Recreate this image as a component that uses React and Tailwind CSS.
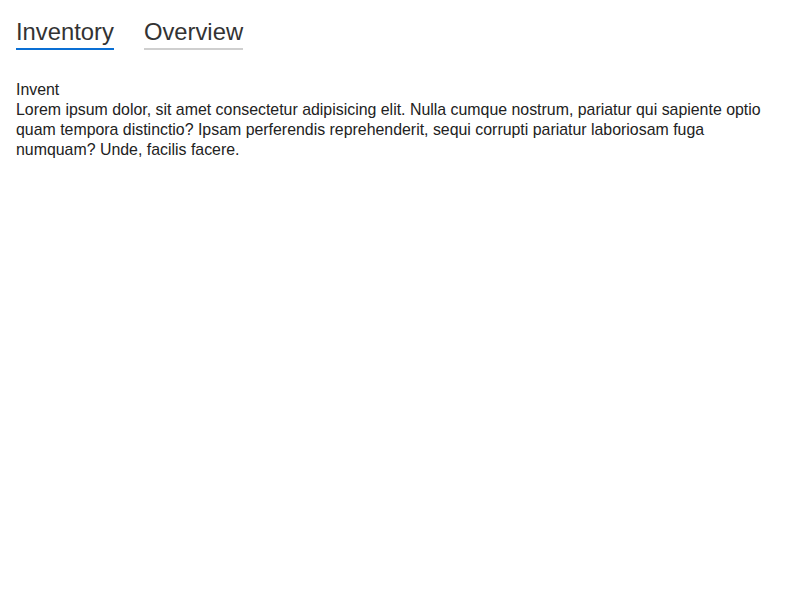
export default function App() {
  return (
    <div className="min-h-screen bg-white px-4 pt-[18px] text-[#222]" style={{ fontFamily: '"Liberation Sans", Arial, sans-serif' }}>
      <div className="flex gap-[30px]">
        <div className="border-b-2 border-[#0a6fd4] pb-[2px] text-[23.8px] leading-[28px] text-[#333]">Inventory</div>
        <div className="border-b-2 border-[#cfcfcf] pb-[2px] text-[23.8px] leading-[28px] text-[#333]">Overview</div>
      </div>
      <div className="mt-[30px] text-[15.9px] leading-[20px]">
        <div>Invent</div>
        <div>
          Lorem ipsum dolor, sit amet consectetur adipisicing elit. Nulla cumque nostrum, pariatur qui sapiente optio quam tempora distinctio? Ipsam perferendis reprehenderit, sequi corrupti pariatur laboriosam fuga numquam? Unde, facilis facere.
        </div>
      </div>
    </div>
  );
}
